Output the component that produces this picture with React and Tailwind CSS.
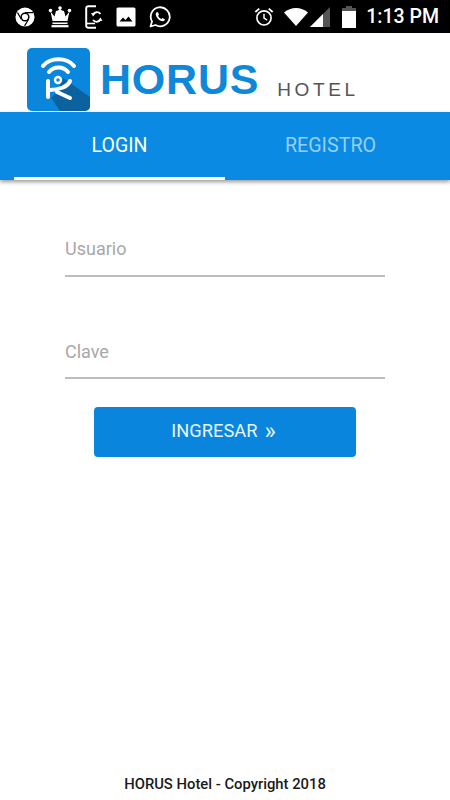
import React from 'react';

const ChromeIcon = () => (
  <svg width="20" height="20" viewBox="0 0 22 22">
    <circle cx="11" cy="11" r="10.5" fill="#fff" />
    <circle cx="11" cy="11" r="5" fill="#000" />
    <circle cx="11" cy="11" r="3.4" fill="#fff" />
    <path d="M11 6.2 H20 M7 13.5 L2.8 6.2 M15 13.5 L10.5 20.8" stroke="#000" strokeWidth="1.3" fill="none" />
  </svg>
);

const CrownIcon = () => (
  <svg width="24" height="23" viewBox="0 0 24 22" fill="#fff">
    <circle cx="2.5" cy="5" r="1.8" />
    <circle cx="12" cy="2.5" r="1.8" />
    <circle cx="21.5" cy="5" r="1.8" />
    <path d="M2.5 6 L6.5 11 L8 5.5 L10 5 L12 3.5 L14 5 L16 5.5 L17.5 11 L21.5 6 L19.5 15.5 H4.5 Z" />
    <rect x="4.5" y="17" width="15" height="1.6" />
    <rect x="3.5" y="19.6" width="17" height="2.2" />
  </svg>
);

const PhoneSyncIcon = () => (
  <svg width="18" height="24" viewBox="0 0 18 24" fill="none" stroke="#fff">
    <path d="M11 1.2 H3.5 A2 2 0 0 0 1.2 3.2 V20.8 A2 2 0 0 0 3.5 22.8 H11" strokeWidth="2" />
    <path d="M1.5 18.5 H10" strokeWidth="1.6" />
    <path d="M15.5 9 A4.5 4.5 0 0 0 8 9.5" strokeWidth="1.8" />
    <path d="M8 15 A4.5 4.5 0 0 0 15.5 14.5" strokeWidth="1.8" />
    <path d="M6 8 L8 11.5 L10.5 8.5 Z M17.5 16 L15.5 12.5 L13 15.5 Z" fill="#fff" stroke="none" />
  </svg>
);

const ImageIcon = () => (
  <svg width="20" height="20" viewBox="0 0 20 20">
    <rect x="0.5" y="0.5" width="19" height="19" rx="1.5" fill="#fff" />
    <path d="M3.5 14.5 L7 10.5 L9.5 13 L12.5 9.5 L16.5 14.5 Z" fill="#000" />
  </svg>
);

const WhatsappIcon = () => (
  <svg width="22" height="22" viewBox="0 0 22 22" fill="none">
    <path d="M1.5 20.5 L3 15.5 A9.5 9.5 0 1 1 6.5 19 Z" stroke="#fff" strokeWidth="1.8" strokeLinejoin="round" />
    <path d="M7.6 6.2 C6.4 7 6.4 9 7.8 11.2 C9.4 13.8 12 15.4 14 15.2 C15.2 15 16 14.2 15.8 13.2 L13.4 12 L12.4 13 C11 12.6 9.6 11 9.1 9.8 L10 8.7 L9 6.2 Z" fill="#fff" />
  </svg>
);

const AlarmIcon = () => (
  <svg width="20" height="20" viewBox="0 0 22 22" fill="none" stroke="#fff" strokeWidth="1.8">
    <circle cx="11" cy="12" r="7.8" />
    <path d="M11 7.5 V12.3 L14.5 14.4" strokeWidth="1.6" />
    <path d="M1.5 5.5 L5.8 1.8 M20.5 5.5 L16.2 1.8" strokeWidth="2" />
  </svg>
);

const WifiIcon = () => (
  <svg width="24" height="18" viewBox="0 0 24 18">
    <path d="M0 4.5 C7 -1.5 17 -1.5 24 4.5 L12 18 Z" fill="#fff" />
  </svg>
);

const SignalIcon = () => (
  <svg width="20" height="20" viewBox="0 0 20 20">
    <path d="M0 20 L20 0 V20 Z" fill="#555" />
    <path d="M0 20 L13 7 V20 Z" fill="#fff" />
  </svg>
);

const BatteryIcon = () => (
  <svg width="14" height="22" viewBox="0 0 14 22">
    <path d="M4 0 H10 V2 H14 V22 H0 V2 H4 Z" fill="#555" />
    <rect x="0" y="5" width="14" height="17" fill="#fff" />
  </svg>
);

const HorusLogo = () => (
  <svg width="63" height="63" viewBox="0 0 63 63" className="shrink-0">
    <rect width="63" height="63" rx="5" fill="#0a87dc" />
    <path d="M36 30 L63 49 V58 A5 5 0 0 1 58 63 H33 L24 50 L30 44 Z" fill="#0b629f" />
    <g fill="none" stroke="#fff" strokeLinecap="round" strokeWidth="4">
      <path d="M16 18 C23 9 40 9 47 18" />
      <path d="M22 24 C27 18 36 18 41 24" />
      <path d="M21 33 V49" />
      <path d="M23 42 C31 42 41 39 43 33" />
      <path d="M30 44 L43 50" />
    </g>
    <circle cx="31" cy="32" r="3" fill="none" stroke="#fff" strokeWidth="2.4" />
  </svg>
);

export default function App() {
  return (
    <div className="flex h-[800px] w-[450px] flex-col overflow-hidden bg-white font-['Roboto',sans-serif]">
      {/* Status bar */}
      <div className="flex h-[33px] items-center justify-between bg-black pl-[15px] pr-[11px]">
        <div className="flex items-center gap-[13px]">
          <ChromeIcon />
          <CrownIcon />
          <PhoneSyncIcon />
          <ImageIcon />
          <WhatsappIcon />
        </div>
        <div className="flex items-center">
          <AlarmIcon />
          <div className="ml-[10px]"><WifiIcon /></div>
          <div className="ml-[2px]"><SignalIcon /></div>
          <div className="ml-[12px]"><BatteryIcon /></div>
          <span className="ml-[10px] text-[19.5px] leading-none font-medium text-white">1:13 PM</span>
        </div>
      </div>

      {/* Logo */}
      <div className="flex h-[79px] pl-[27px] pt-[15px]">
        <HorusLogo />
        <span className="ml-[10px] mt-[7px] font-['Liberation_Sans',sans-serif] text-[43px] leading-[48px] font-bold tracking-[0.8px] text-[#0f88d9]">HORUS</span>
        <span className="ml-[18px] mt-[28px] font-['Liberation_Sans',sans-serif] text-[19px] leading-[28px] tracking-[3.6px] text-[#555555]">HOTEL</span>
      </div>

      {/* Tabs */}
      <div className="relative z-10 flex h-[68px] bg-[#0a8ae3] px-[14px] shadow-[0_2px_4px_rgba(0,0,0,0.4)]">
        <div className="flex w-[211px] items-center justify-center border-b-[3px] border-white pt-[3px] text-[19.5px] text-white">LOGIN</div>
        <div className="flex w-[211px] items-center justify-center text-[19.7px] text-[#95d0f7]">REGISTRO</div>
      </div>

      {/* Form */}
      <div className="flex flex-1 flex-col items-center px-[65px]">
        <div className="mt-[56px] h-[41px] w-full border-b-2 border-[#bdbdbd] text-[18px] leading-[26px] text-[#a8a8a8]">Usuario</div>
        <div className="mt-[62px] h-[40px] w-full border-b-2 border-[#bdbdbd] text-[18px] leading-[26px] text-[#a8a8a8]">Clave</div>
        <button className="mt-[28px] flex h-[50px] w-[262px] items-center justify-center rounded-[4px] bg-[#0a85de] pb-[2px] pr-[3px] text-[18.3px] text-[#e6f5ff]">
          INGRESAR<span className="ml-[7px] text-[24px] leading-[24px]">»</span>
        </button>
      </div>

      {/* Footer */}
      <div className="pb-[6px] text-center text-[14.8px] leading-[20px] font-medium text-[#1a1a1a]">HORUS Hotel - Copyright 2018</div>
    </div>
  );
}
